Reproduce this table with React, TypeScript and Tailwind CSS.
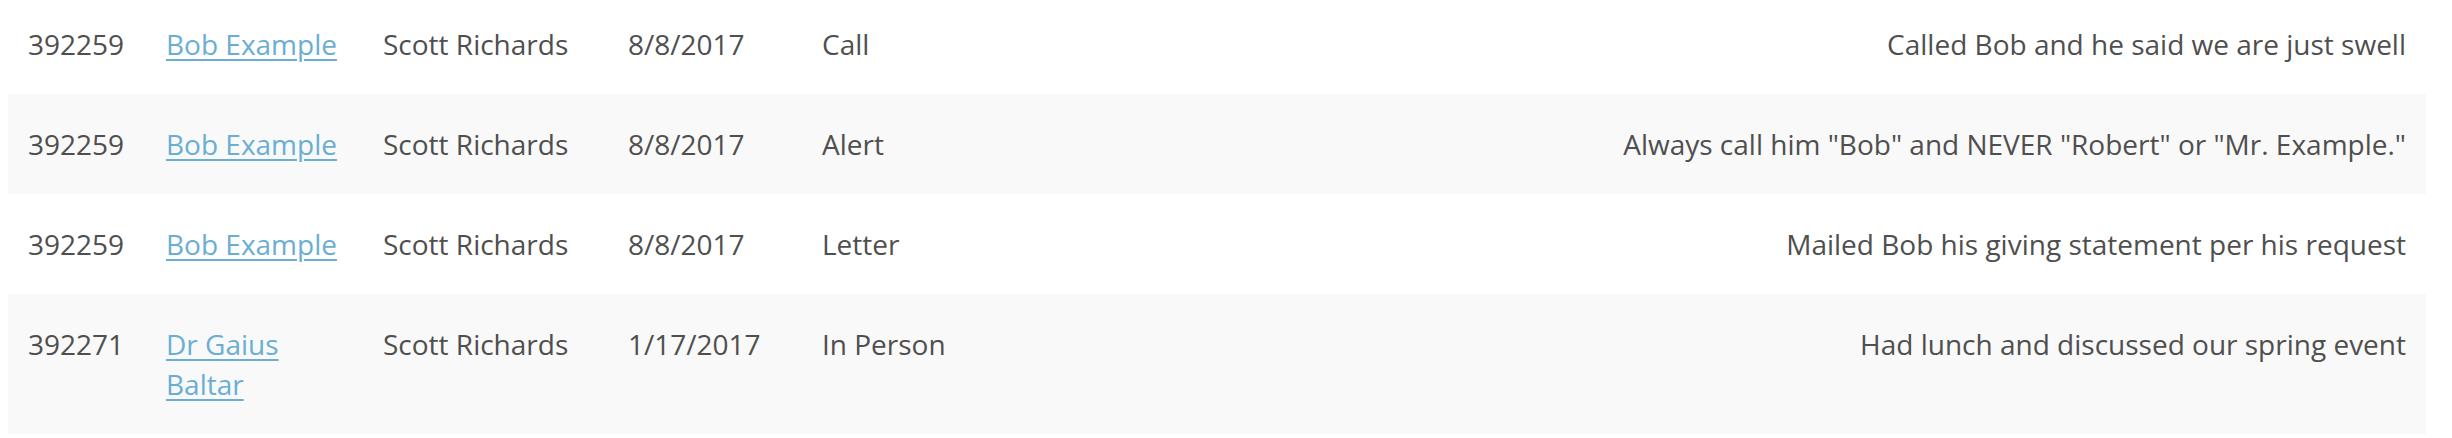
import React from "react";

type Row = { id: string; name: string; by: string; date: string; type: string; note: string };

const rows: Row[] = [
  { id: "392259", name: "Bob Example", by: "Scott Richards", date: "8/8/2017", type: "Call", note: "Called Bob and he said we are just swell" },
  { id: "392259", name: "Bob Example", by: "Scott Richards", date: "8/8/2017", type: "Alert", note: 'Always call him "Bob" and NEVER "Robert" or "Mr. Example."' },
  { id: "392259", name: "Bob Example", by: "Scott Richards", date: "8/8/2017", type: "Letter", note: "Mailed Bob his giving statement per his request" },
  { id: "392271", name: "Dr Gaius Baltar", by: "Scott Richards", date: "1/17/2017", type: "In Person", note: "Had lunch and discussed our spring event" },
];

export default function App() {
  return (
    <div className="w-[2452px] h-[438px] overflow-hidden bg-white">
      <div
        className="ml-[8px] w-[2418px] -mt-[6px] text-[28px] leading-[40px] text-[#4f4f4f]"
        style={{ fontFamily: '"Open Sans", "Noto Sans", sans-serif' }}
      >
        {rows.map((r, i) => (
          <div
            key={i}
            className={`grid grid-cols-[138px_217px_245px_194px_1fr] ${i % 2 === 1 ? "bg-[#f9f9f9]" : "bg-white"}`}
          >
            <div className="px-[20px] py-[30px]">{r.id}</div>
            <div className="px-[20px] py-[30px]">
              <a href="#" className="text-[#6aaed3] underline underline-offset-[4px] decoration-[2px]">
                {r.name}
              </a>
            </div>
            <div className="px-[20px] py-[30px]">{r.by}</div>
            <div className="px-[20px] py-[30px]">{r.date}</div>
            <div className="px-[20px] py-[30px] flex justify-between gap-4">
              <span>{r.type}</span>
              <span className="text-right">{r.note}</span>
            </div>
          </div>
        ))}
      </div>
    </div>
  );
}
